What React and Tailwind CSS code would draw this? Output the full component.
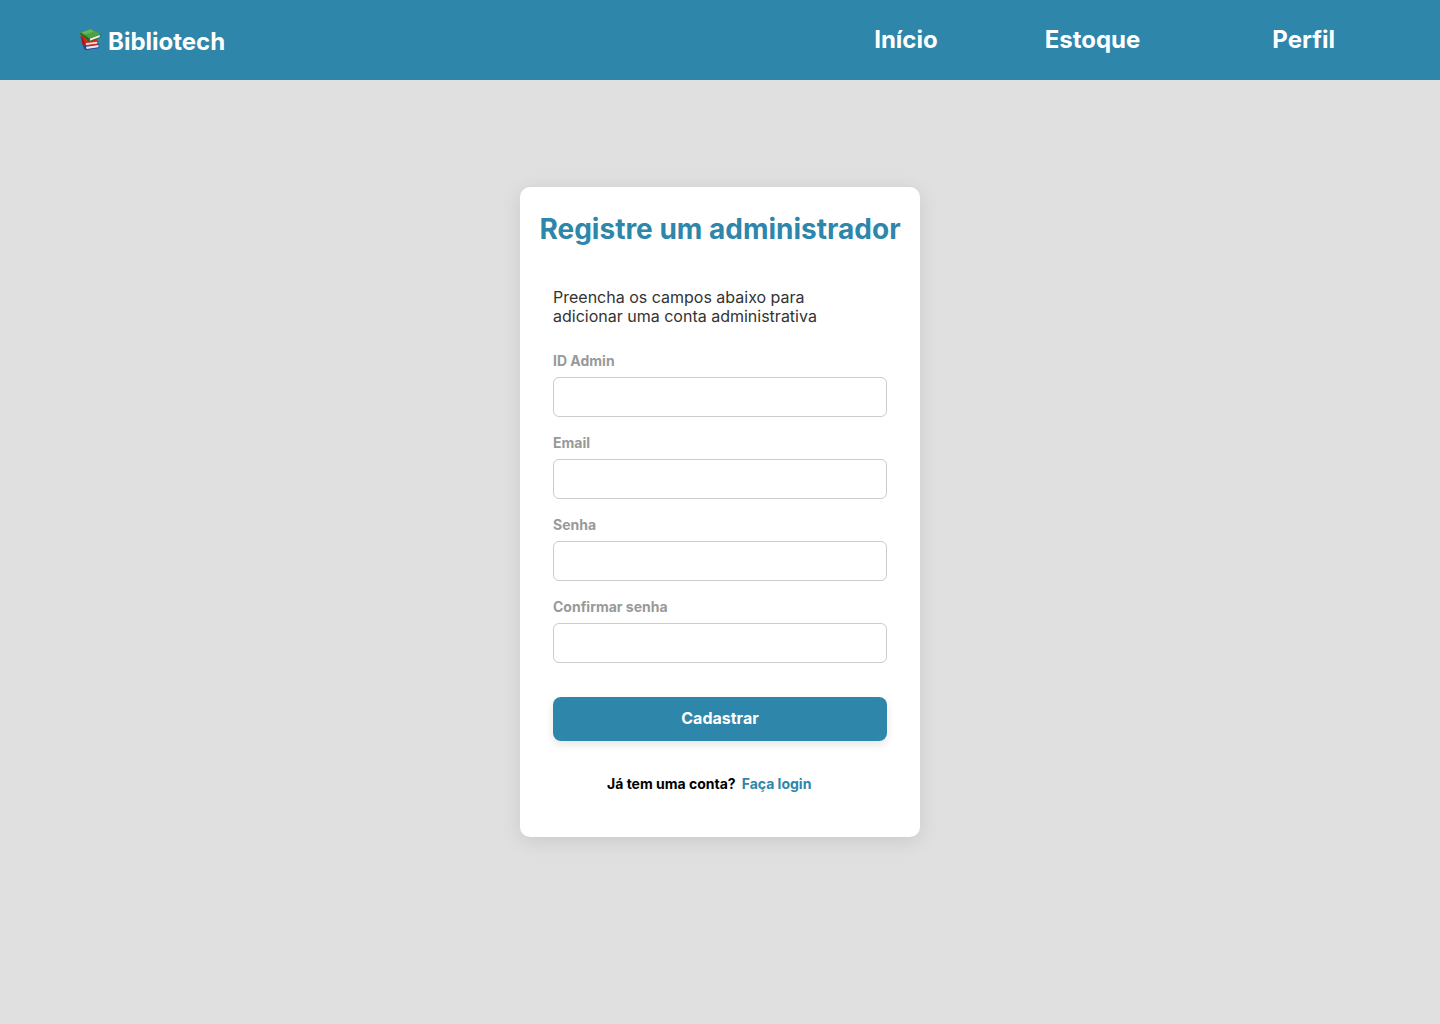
const fields = [
  { id: "admin-id", label: "ID Admin", type: "text" },
  { id: "email", label: "Email", type: "email" },
  { id: "password", label: "Senha", type: "password" },
  { id: "confirm", label: "Confirmar senha", type: "password" },
];

function Books() {
  return (
    <svg viewBox="0 0 24 24" className="mb-1.5 size-6" aria-hidden="true">
      {/* blue book */}
      <path d="M3.5 14.500 6 14 18 16 21.500 17 20.500 18 21.500 21 8 23 6.500 22.500Z" fill="#2b3f92" />
      <path d="M8 19.800 20.500 18 20.500 20.300 8.500 22Z" fill="#e9e6ea" />
      {/* red book */}
      <path d="M2.500 9 6 8 19 11 20 14.500 19.500 17.800 7.500 19.300 5 18Z" fill="#d8291f" />
      <path d="M7.500 16.300 19 14.800 19.300 16.500 8 18Z" fill="#f1e4e2" />
      <path d="M2.500 9.500 5 10.500 7.500 16.500 7.500 19.300 5 18Z" fill="#a81c1c" />
      {/* green book */}
      <path d="M2 5.600 2.500 7.500 11.500 14.800 22 10.800 22.500 7Z" fill="#23691f" />
      <path d="M11.800 11.500 22 7.800 21.500 10.200 12 13.800Z" fill="#e6eadf" />
      <path d="M2 5.500 12.600 1.700 22.700 6.900 11.500 11.300Z" fill="#4da043" />
      <path d="M4 5.600 12.500 2.600 16 4.400 7 7.500Z" fill="#68b65a" />
    </svg>
  );
}

export default function App() {
  return (
    <div className="min-h-screen bg-[#e0e0e0] font-[Inter,sans-serif]">
      <header className="flex h-20 items-center justify-between bg-[#2e86ab] pl-[78px] pr-[105px] text-2xl font-bold text-white">
        <a href="#" className="flex items-center gap-1.5 pt-1"><Books />Bibliotech</a>
        <nav className="flex">
          <a href="#" className="mr-[107px]">Início</a>
          <a href="#" className="mr-[132px]">Estoque</a>
          <a href="#">Perfil</a>
        </nav>
      </header>
      <main className="flex justify-center px-4 pt-[107px] pb-16">
        <section className="w-full max-w-[400px] rounded-[10px] bg-white pt-6 pb-[43px] shadow-[0_4px_20px_rgba(0,0,0,0.1)]">
          <h1 className="text-center text-[28px] leading-9 font-bold whitespace-nowrap text-[#2e86ab]">Registre um administrador</h1>
          <form className="px-[33px] pt-[41px]">
            <p className="w-[280px] text-base leading-[19px] text-[#333]">Preencha os campos abaixo para adicionar uma conta administrativa</p>
            <div className="mt-[25px] flex flex-col gap-4">
              {fields.map((f) => (
                <div key={f.id} className="flex flex-col gap-1.5">
                  <label htmlFor={f.id} className="text-sm leading-5 font-bold text-[#999]">{f.label}</label>
                  <input id={f.id} type={f.type} className="h-10 w-full rounded-md border border-[#ccc] bg-white px-3" />
                </div>
              ))}
            </div>
            <button type="button" className="mt-[34px] h-11 w-full rounded-lg bg-[#2e86ab] pb-0.5 text-base font-bold text-white shadow-[0_4px_8px_rgba(0,0,0,0.1)]">Cadastrar</button>
            <p className="mt-[33px] flex gap-1.5 pl-[54px] text-sm leading-5 font-bold text-black">
              Já tem uma conta? <a href="#" className="text-[#2e86ab]">Faça login</a>
            </p>
          </form>
        </section>
      </main>
    </div>
  );
}
